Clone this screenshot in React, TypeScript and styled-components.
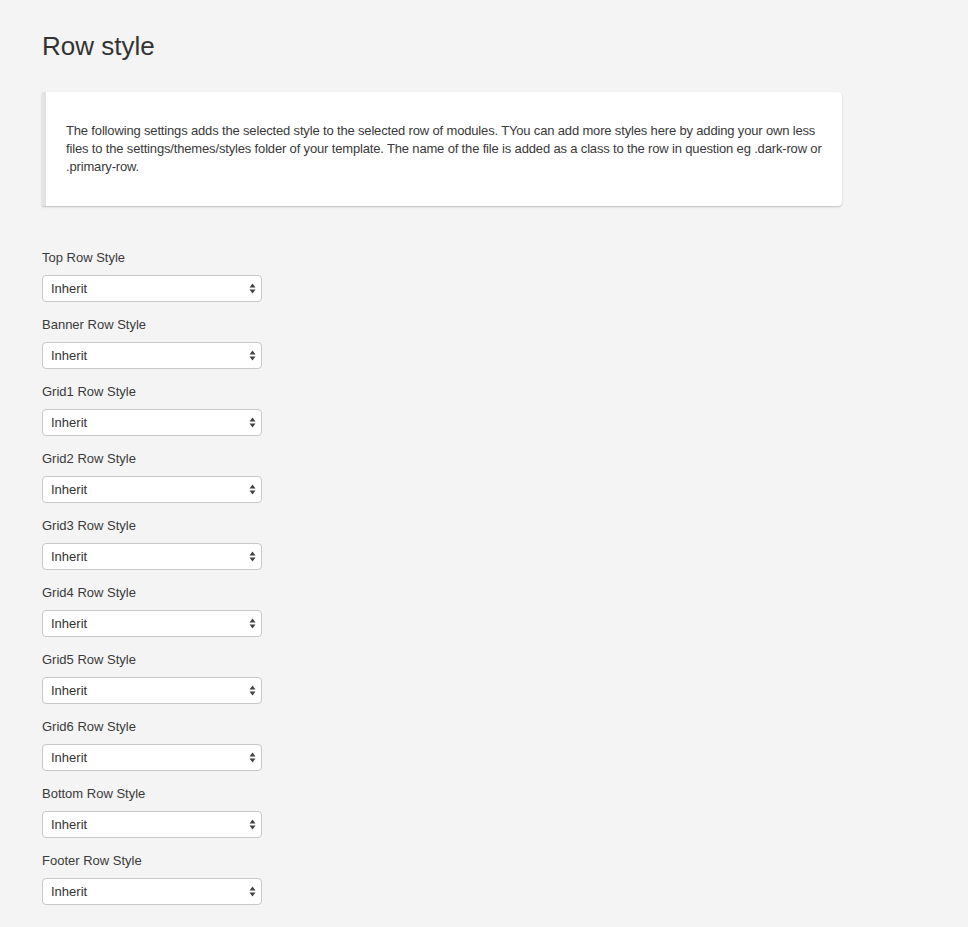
import React from "react";
import styled, { createGlobalStyle } from "styled-components";

const Global = createGlobalStyle`
  html, body { margin: 0; padding: 0; background: #f4f4f4; }
  body { font-family: "Liberation Sans", Arial, sans-serif; color: #333; }
`;

const Page = styled.div`
  padding: 31px 42px 22px 42px;
  width: 800px;
`;

const Title = styled.h1`
  margin: 0 0 31px 0;
  font-size: 26px;
  font-weight: 400;
  line-height: 30px;
  color: #333;
`;

const Card = styled.div`
  background: #fff;
  border-left: 4px solid #e3e3e3;
  border-radius: 0 4px 4px 0;
  box-shadow: 0 1px 2px rgba(0, 0, 0, 0.22);
  padding: 30px 20px 30px 20px;
  font-size: 13px;
  line-height: 18px;
  letter-spacing: -0.16px;
  color: #3a3a3a;
  margin-bottom: 43px;
`;

const Field = styled.div`
  display: flex;
  flex-direction: column;
  margin-bottom: 14px;
`;

const Label = styled.label`
  font-size: 13px;
  line-height: 18px;
  margin-bottom: 8px;
  color: #3a3a3a;
`;

const SelectWrap = styled.div`
  position: relative;
  width: 220px;
  height: 27px;
`;

const Select = styled.select`
  appearance: none;
  -webkit-appearance: none;
  width: 220px;
  height: 27px;
  box-sizing: border-box;
  border: 1px solid #c8c8c8;
  border-radius: 4px;
  background: #fff;
  padding: 0 24px 0 8px;
  font-family: "Liberation Sans", Arial, sans-serif;
  font-size: 13px;
  color: #333;
  outline: none;
`;

const Arrows = styled.svg`
  position: absolute;
  right: 6px;
  top: 8px;
  pointer-events: none;
`;

const rows = [
  "Top Row Style",
  "Banner Row Style",
  "Grid1 Row Style",
  "Grid2 Row Style",
  "Grid3 Row Style",
  "Grid4 Row Style",
  "Grid5 Row Style",
  "Grid6 Row Style",
  "Bottom Row Style",
  "Footer Row Style",
];

export default function App() {
  return (
    <>
      <Global />
      <Page>
        <Title>Row style</Title>
        <Card>
          The following settings adds the selected style to the selected row of modules. TYou can add
          more styles here by adding your own less files to the settings/themes/styles folder of your
          template. The name of the file is added as a class to the row in question eg .dark-row or
          .primary-row.
        </Card>
        {rows.map((r, i) => (
          <Field key={r}>
            <Label htmlFor={`row-${i}`}>{r}</Label>
            <SelectWrap>
              <Select id={`row-${i}`} defaultValue="inherit">
                <option value="inherit">Inherit</option>
              </Select>
              <Arrows width="7" height="11" viewBox="0 0 7 11">
                <path d="M3.5 0.5 L6.5 4.5 L0.5 4.5 Z" fill="#444" />
                <path d="M3.5 10.5 L6.5 6.5 L0.5 6.5 Z" fill="#444" />
              </Arrows>
            </SelectWrap>
          </Field>
        ))}
      </Page>
    </>
  );
}
